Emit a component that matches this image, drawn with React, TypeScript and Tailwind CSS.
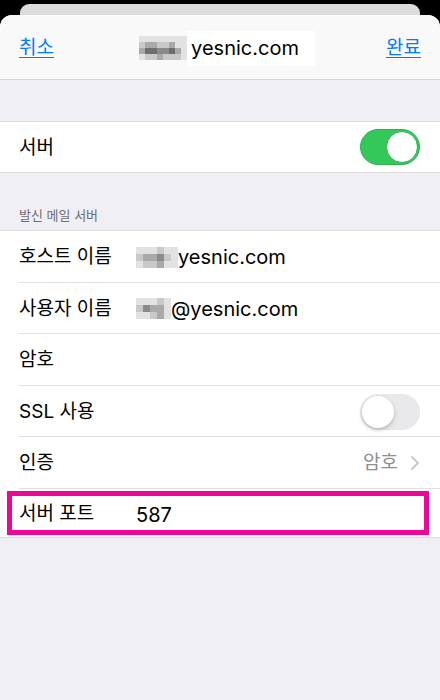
import React from "react";

const font = { fontFamily: '"Inter", "Noto Sans CJK KR", sans-serif' };

function Blur({ cells, size }: { cells: string[][]; size: number }) {
  return (
    <div className="flex flex-col">
      {cells.map((row, i) => (
        <div key={i} className="flex">
          {row.map((c, j) => (
            <div key={j} style={{ width: size, height: size, background: c }} />
          ))}
        </div>
      ))}
    </div>
  );
}

function Toggle({ on }: { on: boolean }) {
  return on ? (
    <div className="relative h-[36px] w-[60px] rounded-full bg-[#34c759] border border-[#2db24e]">
      <div className="absolute right-[1px] top-[1px] h-[32px] w-[32px] rounded-full bg-white border border-[#2db24e]" />
    </div>
  ) : (
    <div className="relative h-[36px] w-[60px] rounded-full bg-[#e9e9eb]">
      <div className="absolute left-[2px] top-[2px] h-[32px] w-[32px] rounded-full bg-white shadow-[0_2px_4px_rgba(0,0,0,0.22)]" />
    </div>
  );
}

function Row({ children, last }: { children: React.ReactNode; last?: boolean }) {
  return (
    <div className="pl-[19px] bg-white">
      <div className={`flex h-[51.5px] items-center pt-[2px] pr-[20px] ${last ? "" : "border-b border-[#e0e0e3]"}`}>{children}</div>
    </div>
  );
}

const g1 = "#c9c9c9", g2 = "#a9a9a9", g3 = "#8a8a8a", g4 = "#e2e2e2", g5 = "#6e6e6e";

export default function App() {
  return (
    <div className="w-[440px] h-[700px] bg-black overflow-hidden relative" style={font}>
      <div className="mx-[20px] mt-[4px] h-[20px] rounded-t-[9px] bg-[#dcdcdc]" />
      <div className="absolute left-0 right-0 top-[15px] bottom-0 rounded-t-[12px] bg-[#efeff4] overflow-hidden">
        {/* Nav bar */}
        <div className="flex h-[65px] items-center justify-between border-b border-[#d6d6da] bg-[#f9f9f9] px-[19px] pt-[2px]">
          <span className="text-[19px] text-[#007aff] underline underline-offset-[3px] decoration-[1px]">취소</span>
          <div className="flex items-center ml-[14px]">
            <Blur
              size={6}
              cells={[
                [g4, g4, g4, g4, g4, g4, g4, g4],
                [g1, g2, g2, g1, g1, g2, g4, g4],
                [g2, g5, g5, g3, g3, g5, g2, g4],
                [g4, g1, g1, g2, g1, g1, g1, g4],
              ]}
            />
            <div className="flex h-[35px] items-center bg-white pl-[4px] pr-[16px] text-[20px] text-black">yesnic.com</div>
          </div>
          <span className="text-[19px] text-[#007aff] underline underline-offset-[3px] decoration-[1px]">완료</span>
        </div>

        <div className="h-[41px]" />
        <div className="border-y border-[#dcdce0] bg-white">
          <div className="flex h-[50px] items-center justify-between pl-[19px] pr-[20px]">
            <span className="text-[19px] text-black pt-[3px]">서버</span>
            <Toggle on />
          </div>
        </div>

        <div className="flex h-[57px] items-end pb-[5px] pl-[19px]">
          <span className="text-[13px] text-[#6d6d72]">발신 메일 서버</span>
        </div>

        <div className="border-y border-[#dcdce0] bg-white">
          <Row>
            <span className="w-[117px] text-[19px] text-black">호스트 이름</span>
            <Blur
              size={7}
              cells={[
                [g4, g4, g4, g1, g4, g4],
                [g1, g2, g2, g3, g1, g4],
                [g4, g1, g1, g2, g4, g4],
              ]}
            />
            <span className="text-[20px] text-black">yesnic.com</span>
          </Row>
          <Row>
            <span className="w-[117px] text-[19px] text-black">사용자 이름</span>
            <Blur
              size={7}
              cells={[
                [g4, g4, g4, g1, g4],
                [g1, g3, g2, g2, g4],
                [g4, g4, g1, g2, g4],
              ]}
            />
            <span className="text-[20px] text-black">@yesnic.com</span>
          </Row>
          <Row>
            <span className="text-[19px] text-black">암호</span>
          </Row>
          <Row>
            <span className="flex-1 text-[19px] text-black">SSL 사용</span>
            <Toggle on={false} />
          </Row>
          <Row>
            <span className="flex-1 text-[19px] text-black">인증</span>
            <span className="text-[19px] text-[#8e8e93]">암호</span>
            <svg width="10" height="16" viewBox="0 0 10 16" className="ml-[12px]">
              <path d="M2 2 L8 8 L2 14" fill="none" stroke="#c7c7cc" strokeWidth="1.8" strokeLinecap="round" strokeLinejoin="round" />
            </svg>
          </Row>
          <div className="bg-white px-[7px] py-[2px] pr-[11px]">
            <div className="flex h-[44px] items-center border-[5px] border-[#ef0599] pl-[7px] pt-[4px]">
              <span className="w-[117px] text-[19px] text-black">서버 포트</span>
              <span className="text-[20px] text-black">587</span>
            </div>
          </div>
        </div>
      </div>
    </div>
  );
}
